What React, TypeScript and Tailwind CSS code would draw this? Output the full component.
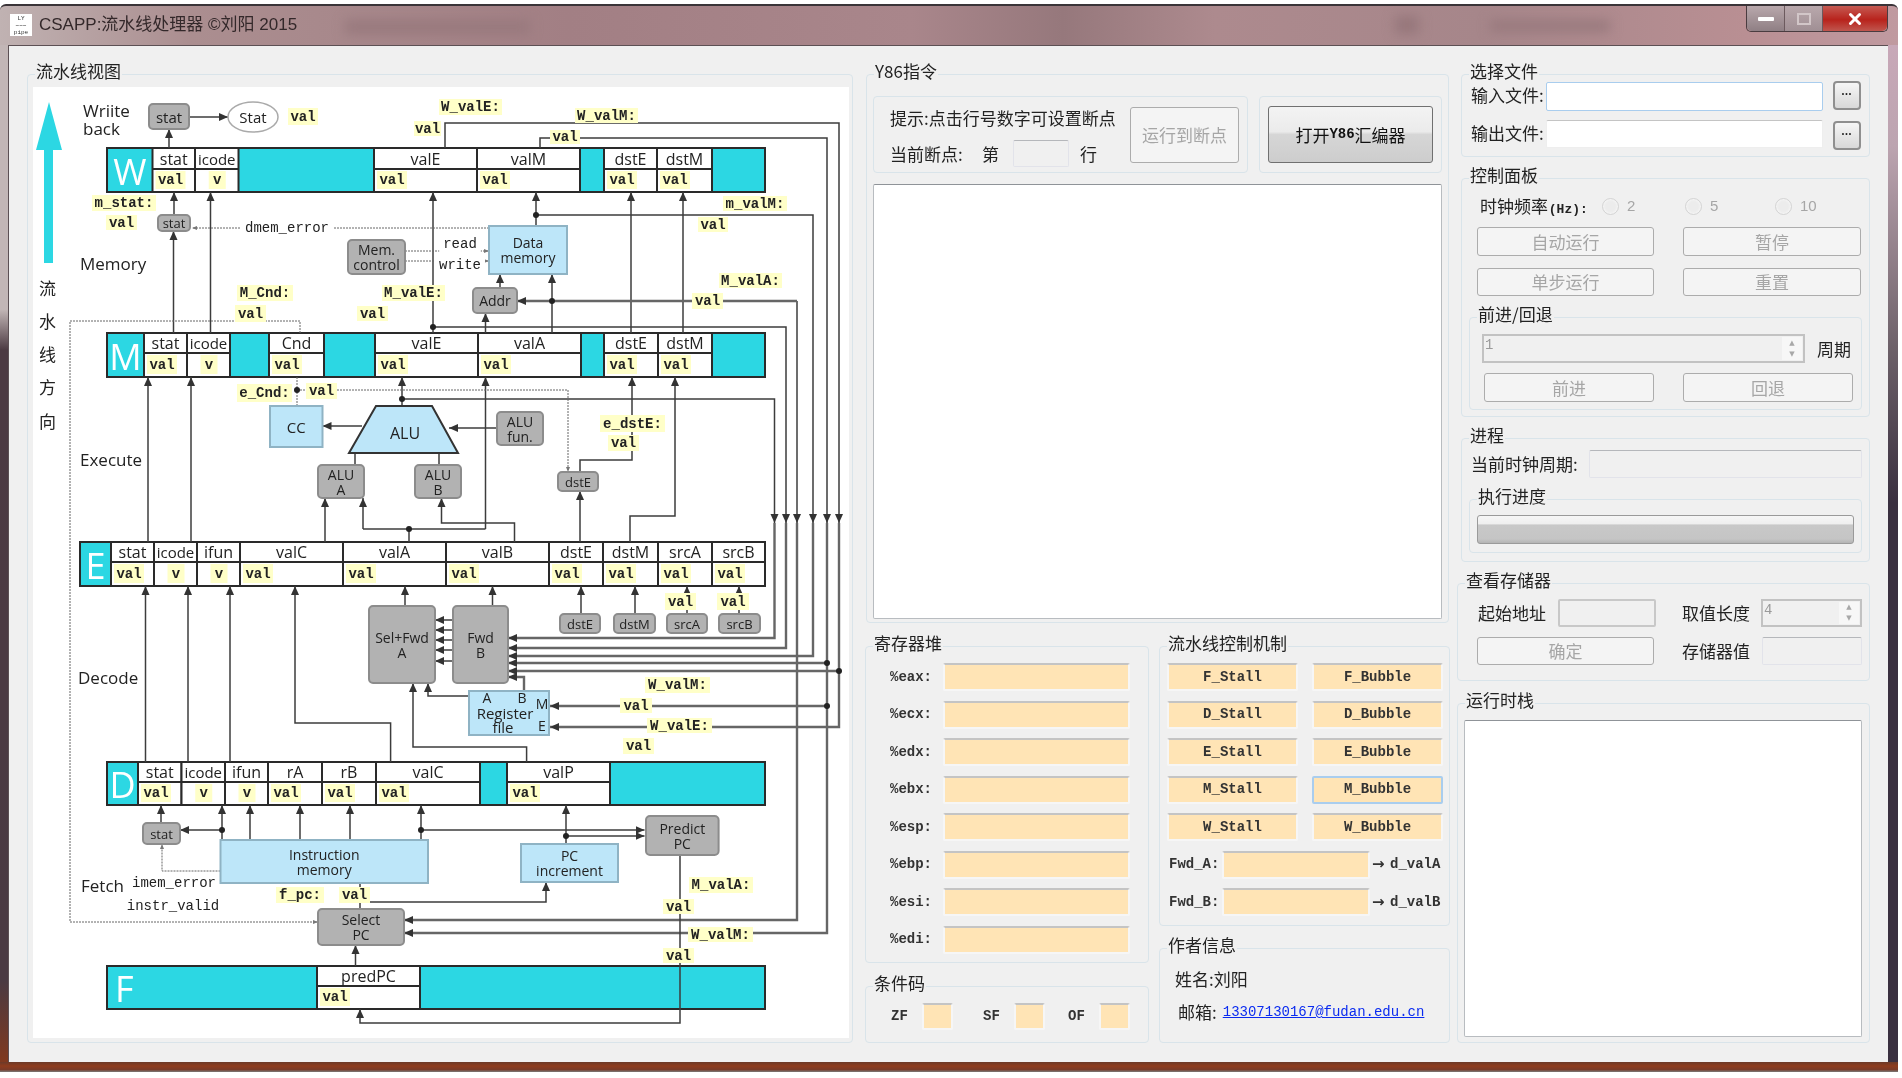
import { X } from "lucide-react";
import type { ReactNode } from "react";

const mono = "font-['Liberation_Mono',monospace]";
const disabledBtn = "flex items-center justify-center rounded-[3px] border border-[#acacac] bg-[#f4f4f4] text-[#a6a6a6]";
const readonlyBox = "block rounded-[2px] border border-[#e2e3ea] border-t-[#b5b7bb] bg-[#f0f0f0] outline-none";
const orangeBox = "block rounded-[2px] border-2 border-[#f6f6f6] border-t-[#c4c4c4] bg-[#ffe4b5] outline-none";
const dotsBtn = "flex w-[28px] items-center justify-center rounded-[4px] border-2 border-[#8f8f8f] bg-[linear-gradient(180deg,#f6f6f6,#d8d8d8)]";

const Group = ({ title, className, children }: { title: string; className: string; children?: ReactNode }) => (
  <div className={`relative rounded-[4px] border border-[#d9e4ea] ${className}`}>
    <span className="absolute -top-[15px] left-[7px] bg-[#f0f0f0] px-[1px] text-[17px] leading-[22px] text-[#222]">{title}</span>
    {children}
  </div>
);

const Spinner = ({ value, className }: { value: string; className: string }) => (
  <div className={`flex justify-between border-2 border-[#c2c2c2] bg-[#f0f0f0] ${className}`}>
    <span className={`${mono} pl-[1px] text-[14px] leading-[18px] text-[#9a9a9a]`}>{value}</span>
    <div className="m-[1px] flex w-[20px] flex-col items-center justify-center bg-[#f7f7f7] text-[7px] leading-[11px] text-[#a8a8a8]">
      <span className="font-['DejaVu_Sans']">▲</span>
      <span className="font-['DejaVu_Sans']">▼</span>
    </div>
  </div>
);

// ---- diagram ----
type Cell = { x: number; t?: string; v?: "val" | "v" };
type RegProps = { x0: number; y0: number; y1: number; mid: number; letter: string; letterEnd: number; cells: Cell[] };

const CYAN = "#2cd7e3";
const BLUE = "#bde6f9";

const Reg = ({ x0, y0, y1, mid, letter, letterEnd, cells }: RegProps) => {
  let prev = letterEnd;
  return (
    <g>
      <rect x={x0} y={y0} width={765 - x0} height={y1 - y0} fill={CYAN} stroke="#2a2a2a" strokeWidth={2} />
      <text x={letter === "F" ? x0 + 8 : (x0 + letterEnd) / 2} y={(y0 + y1) / 2 + 1} fill="#fff" fontSize={36} fontWeight={400} textAnchor={letter === "F" ? "start" : "middle"} dominantBaseline="central">{letter}</text>
      {cells.map((c) => {
        const start = prev;
        prev = c.x;
        if (!c.t) return null;
        const w = c.x - start;
        return (
          <g key={start}>
            <rect x={start} y={y0} width={w} height={y1 - y0} fill="#fff" stroke="#2a2a2a" strokeWidth={2} />
            <line x1={start} x2={c.x} y1={mid} y2={mid} stroke="#2a2a2a" strokeWidth={2} />
            <text x={start + w / 2} y={(y0 + mid) / 2} fontSize={c.t.length > 4 && w < 50 ? 15 : 16} fill="#222" textAnchor="middle" dominantBaseline="central">{c.t}</text>
            {c.v === "val" && <Tag x1={start + 3} y1={mid + 2} x2={start + 33} y2={y1 - 3} t="val" />}
            {c.v === "v" && <Tag x1={start + w / 2 - 8} y1={mid + 2} x2={start + w / 2 + 9} y2={y1 - 3} t="v" />}
          </g>
        );
      })}
    </g>
  );
};

const Tag = ({ x1, y1, x2, y2, t }: { x1: number; y1: number; x2: number; y2: number; t: string }) => (
  <g>
    <rect x={x1} y={y1} width={x2 - x1} height={y2 - y1} fill="#ffffc8" />
    <text className={mono} x={(x1 + x2) / 2} y={(y1 + y2) / 2} fontSize={14} fontWeight={700} fill="#222" textAnchor="middle" dominantBaseline="central">{t}</text>
  </g>
);

const Box = ({ x1, y1, x2, y2, lines, fill = "#b2b2b2", size = 14, gap = 15 }: { x1: number; y1: number; x2: number; y2: number; lines: string[]; fill?: string; size?: number; gap?: number }) => {
  const cy = (y1 + y2) / 2 - ((lines.length - 1) * gap) / 2;
  return (
    <g>
      <rect x={x1} y={y1} width={x2 - x1} height={y2 - y1} rx={fill === BLUE ? 0 : 4} fill={fill} stroke={fill === BLUE ? "#8fb3c4" : "#8c8c8c"} strokeWidth={2} />
      {lines.map((l, i) => (
        <text key={l} x={(x1 + x2) / 2} y={cy + i * gap} fontSize={size} fill="#222" textAnchor="middle" dominantBaseline="central">{l}</text>
      ))}
    </g>
  );
};

const arrows = [
  "169,148 169,129", "189,117 228,117", "174,215 174,192", "173.5,333 173.5,231", "210.5,333 210.5,192",
  "433,333 433,192", "536,226 536,192", "631,333 631,192", "683,333 683,192", "552,333 552,274",
  "500,288 500,274", "485.5,333 485.5,313", "797,301 797,523",
  "445,148 445,123 839,123 839,523",
  "540,148 540,138 827,138 827,523",
  "536,215 813,215 813,523", "433,327 786,327 786,523",
  "402,399 774.5,399 774.5,523",
  "148,542 148,377", "191,542 191,377", "402,406 402,377", "362,426 322.5,426", "497,428 449,428",
  "325,542 325,498", "363,529 363,498", "485.5,529 485.5,377", "514.5,542 514.5,523 441.5,523 441.5,498",
  "580,542 580,491", "580,472 580,460 632,460 632,377", "630,542 630,516 675,516 675,377",
  "145.5,762 145.5,586", "188,762 188,586", "230,762 230,586", "390.6,762 390.6,723 295,723 295,586",
  "405,606 405,586", "492.5,606 492.5,586", "581,614 581,586", "635,614 635,586", "687,614 687,586", "739,614 739,586",
  "453,620 435,620", "453,630 435,630", "453,640 435,640", "453,650 435,650", "453,661 435,661",
  "469,696 428,696 428,683", "526.6,762 526.6,747 413,747 413,683",
  "161,823 161,805", "222,840 222,805", "250,840 250,805", "300,840 300,805", "350,840 350,805", "421,840 421,805", "566,843 566,805",
  "222,830 180,830", "421,830 644.5,830", "566,836 644.5,836", "370,902 546,902 546,882", "355.5,966 355.5,945",
];
const thick = [
  "797,301 517,301", "797,523 797,920 404,920", "839,523 839,727 550,727", "839,671 508,671", "827,523 827,933 404,933", "827,663 508,663",
  "827,706 550,706", "813,523 813,656 508,656", "786,523 786,648 508,648", "774.5,523 774.5,638 508,638", "524,691 524,677 508,677",
];
const plain = ["355,453 355,465", "439,453 439,465", "409,542 409,529", "363,529 485.5,529", "360,883 360,909"];
const dotted = ["300,333 300,321 70,321 70,922 318,922", "220.5,871 162,871 162,844", "489,228 192,228", "337,390 568,390 568,472", "405,251 489,251", "405,261 489,261"];
const dots = [[536, 215], [433, 327], [552, 301], [402, 399], [409, 529], [827, 663], [839, 671], [827, 706], [222, 830], [421, 830], [566, 836], [297, 390]];

const tags: [number, number, number, number, string][] = [
  [288, 108, 318, 125, "val"], [439, 99, 502, 115, "W_valE:"], [414, 121, 441, 136, "val"], [575, 108, 638, 123, "W_valM:"],
  [550, 130, 580, 144, "val"], [92, 195, 156, 211, "m_stat:"], [106, 215, 137, 230, "val"], [723, 196, 787, 211, "m_valM:"],
  [698, 217, 728, 232, "val"], [719, 273, 782, 288, "M_valA:"], [692, 293, 723, 309, "val"], [237, 285, 293, 301, "M_Cnd:"],
  [235, 305, 266, 322, "val"], [382, 285, 445, 301, "M_valE:"], [357, 306, 388, 321, "val"], [237, 384, 292, 402, "e_Cnd:"],
  [306, 383, 337, 399, "val"], [600, 415, 665, 432, "e_dstE:"], [608, 435, 639, 451, "val"], [665, 593, 696, 610, "val"],
  [717, 593, 749, 610, "val"], [645, 677, 710, 693, "W_valM:"], [620, 698, 652, 713, "val"], [647, 718, 712, 733, "W_valE:"],
  [623, 738, 654, 754, "val"], [689, 877, 753, 893, "M_valA:"], [663, 899, 694, 914, "val"], [276, 887, 324, 903, "f_pc:"],
  [339, 887, 370, 903, "val"], [688, 927, 753, 942, "W_valM:"], [663, 948, 694, 963, "val"],
];

const sideText: [string, number, number][] = [["Memory", 80, 263], ["Execute", 80, 459], ["Decode", 78, 677], ["Fetch", 81, 885]];
const monoText: [string, number, number, string?][] = [
  ["dmem_error", 287, 228, "bg"], ["read", 460, 244, "bg"], ["write", 460, 265, "bg"], ["imem_error", 174, 883], ["instr_valid", 173, 906],
];
const rfLetters: [string, number, number][] = [["A", 487, 697], ["B", 522, 697], ["M", 542, 703], ["E", 542, 725]];

const Diagram = () => (
  <svg className="block bg-white font-['Open_Sans',sans-serif]" width={816} height={951} viewBox="33 87 816 951">
    <defs>
      <marker id="tip" markerUnits="userSpaceOnUse" markerWidth={10} markerHeight={10} refX={9} refY={5} orient="auto">
        <path d="M0 1 L9 5 L0 9 Z" fill="#333" />
      </marker>
      <marker id="tinyTip" markerUnits="userSpaceOnUse" markerWidth={6} markerHeight={6} refX={5} refY={3} orient="auto">
        <path d="M0 1 L5 3 L0 5 Z" fill="#777" />
      </marker>
    </defs>

    <path d="M49 102 L62 150 L53 150 L53 263 L44 263 L44 150 L36 150 Z" fill={CYAN} />
    {["流", "水", "线", "方", "向"].map((c, i) => (
      <text key={c} className="font-['Noto_Sans_CJK_SC',sans-serif]" x={47.5} y={287 + i * 33.3} fontSize={17} fill="#222" textAnchor="middle" dominantBaseline="central">{c}</text>
    ))}
    <text x={83} y={110} fontSize={17} fill="#222" dominantBaseline="central">Wriite</text>
    <text x={83} y={128} fontSize={17} fill="#222" dominantBaseline="central">back</text>
    {sideText.map(([t, x, y]) => (
      <text key={t} x={x} y={y} fontSize={17} fill="#222" dominantBaseline="central">{t}</text>
    ))}

    <Reg x0={107} y0={148} y1={192} mid={169} letter="W" letterEnd={152.5} cells={[
      { x: 195, t: "stat", v: "val" }, { x: 238.5, t: "icode", v: "v" }, { x: 374 }, { x: 477, t: "valE", v: "val" }, { x: 580, t: "valM", v: "val" },
      { x: 604 }, { x: 657, t: "dstE", v: "val" }, { x: 712, t: "dstM", v: "val" },
    ]} />
    <Reg x0={107} y0={333} y1={377} mid={353} letter="M" letterEnd={144} cells={[
      { x: 187, t: "stat", v: "val" }, { x: 230, t: "icode", v: "v" }, { x: 269 }, { x: 324, t: "Cnd", v: "val" }, { x: 375 }, { x: 478, t: "valE", v: "val" },
      { x: 581, t: "valA", v: "val" }, { x: 604 }, { x: 658, t: "dstE", v: "val" }, { x: 712, t: "dstM", v: "val" },
    ]} />
    <Reg x0={80} y0={542} y1={586} mid={562} letter="E" letterEnd={111} cells={[
      { x: 154, t: "stat", v: "val" }, { x: 197, t: "icode", v: "v" }, { x: 240, t: "ifun", v: "v" }, { x: 343, t: "valC", v: "val" }, { x: 446, t: "valA", v: "val" },
      { x: 549, t: "valB", v: "val" }, { x: 603, t: "dstE", v: "val" }, { x: 658, t: "dstM", v: "val" }, { x: 712, t: "srcA", v: "val" }, { x: 765, t: "srcB", v: "val" },
    ]} />
    <Reg x0={107} y0={762} y1={805} mid={782} letter="D" letterEnd={138} cells={[
      { x: 181.5, t: "stat", v: "val" }, { x: 225, t: "icode", v: "v" }, { x: 268, t: "ifun", v: "v" }, { x: 322, t: "rA", v: "val" }, { x: 376, t: "rB", v: "val" },
      { x: 480, t: "valC", v: "val" }, { x: 507 }, { x: 610, t: "valP", v: "val" },
    ]} />
    <Reg x0={107} y0={966} y1={1009} mid={986} letter="F" letterEnd={317} cells={[{ x: 420, t: "predPC", v: "val" }]} />

    <g fill="none" stroke="#3c3c3c" strokeWidth={1.5}>
      {arrows.map((p) => <polyline key={p} points={p} markerEnd="url(#tip)" />)}
      {plain.map((p) => <polyline key={p} points={p} />)}
      {thick.map((p) => <polyline key={p} points={p} stroke="#666" strokeWidth={2.4} markerEnd="url(#tip)" />)}
      <polyline points="680,855 680,1023 360,1023 360,1009" markerEnd="url(#tip)" />
      {dotted.map((p) => <polyline key={p} points={p} stroke="#666" strokeWidth={1} strokeDasharray="2 1" markerEnd="url(#tinyTip)" />)}
      <polyline points="297,406 297,377" stroke="#666" strokeWidth={1} strokeDasharray="2 1" />
      <polyline points="297,390 306,390" stroke="#666" strokeWidth={1} strokeDasharray="2 1" />
    </g>
    {dots.map(([x, y]) => <circle key={`${x}-${y}`} cx={x} cy={y} r={3} fill="#222" />)}

    <Box x1={149} y1={104} x2={189} y2={129} lines={["stat"]} size={15} />
    <ellipse cx={253} cy={117} rx={25} ry={15} fill="#fff" stroke="#aaa" strokeWidth={1.5} />
    <text x={253} y={117} fontSize={15} fill="#222" textAnchor="middle" dominantBaseline="central">Stat</text>
    <Box x1={158} y1={215} x2={190} y2={231} lines={["stat"]} size={13} />
    <Box x1={489} y1={226} x2={567} y2={274} lines={["Data", "memory"]} fill={BLUE} />
    <Box x1={348} y1={240} x2={405} y2={274} lines={["Mem.", "control"]} />
    <Box x1={473} y1={288} x2={517} y2={313} lines={["Addr"]} />
    <Box x1={270} y1={406} x2={322.5} y2={447} lines={["CC"]} fill={BLUE} size={15} />
    <path d="M376 406 L432 406 L458 453 L349 453 Z" fill={BLUE} stroke="#333" strokeWidth={2} />
    <text x={405} y={433} fontSize={16} fill="#222" textAnchor="middle" dominantBaseline="central">ALU</text>
    <Box x1={497} y1={412} x2={543} y2={445} lines={["ALU", "fun."]} />
    <Box x1={318} y1={465} x2={364} y2={498} lines={["ALU", "A"]} />
    <Box x1={415} y1={465} x2={461} y2={498} lines={["ALU", "B"]} />
    <Box x1={558} y1={472} x2={598} y2={491} lines={["dstE"]} size={13} />
    <Box x1={369} y1={606} x2={435} y2={683} lines={["Sel+Fwd", "A"]} />
    <Box x1={453} y1={606} x2={508} y2={683} lines={["Fwd", "B"]} />
    <Box x1={560} y1={614} x2={600} y2={633} lines={["dstE"]} size={13} />
    <Box x1={614} y1={614} x2={655} y2={633} lines={["dstM"]} size={13} />
    <Box x1={667} y1={614} x2={707} y2={633} lines={["srcA"]} size={13} />
    <Box x1={719} y1={614} x2={760} y2={633} lines={["srcB"]} size={13} />
    <rect x={469} y={691} width={80} height={44} fill={BLUE} stroke="#8fb3c4" strokeWidth={2} />
    <text x={505} y={713} fontSize={15} fill="#222" textAnchor="middle" dominantBaseline="central">Register</text>
    <text x={503} y={727} fontSize={15} fill="#222" textAnchor="middle" dominantBaseline="central">file</text>
    {rfLetters.map(([t, x, y]) => (
      <text key={t} x={x} y={y} fontSize={14} fill="#222" textAnchor="middle" dominantBaseline="central">{t}</text>
    ))}
    <Box x1={143} y1={823} x2={180} y2={844} lines={["stat"]} size={13} />
    <Box x1={220.5} y1={840} x2={428} y2={883} lines={["Instruction", "memory"]} fill={BLUE} />
    <Box x1={521} y1={844} x2={618} y2={882} lines={["PC", "increment"]} fill={BLUE} />
    <Box x1={646} y1={816} x2={718.6} y2={855} lines={["Predict", "PC"]} />
    <Box x1={318} y1={909} x2={404} y2={945} lines={["Select", "PC"]} />

    {monoText.map(([t, x, y, bg]) => (
      <g key={t}>
        {bg && <rect x={x - t.length * 4.2 - 4} y={y - 8} width={t.length * 8.4 + 8} height={16} fill="#fff" />}
        <text className={mono} x={x} y={y} fontSize={14} fill="#222" textAnchor="middle" dominantBaseline="central">{t}</text>
      </g>
    ))}
    {tags.map(([x1, y1, x2, y2, t]) => <Tag key={`${x1}-${y1}`} x1={x1} y1={y1} x2={x2} y2={y2} t={t} />)}
  </svg>
);

// ---- right hand panels ----
const regs = ["%eax:", "%ecx:", "%edx:", "%ebx:", "%esp:", "%ebp:", "%esi:", "%edi:"];
const stalls = ["F", "D", "E", "M", "W"];

const CtrlCell = ({ text, focused }: { text: string; focused?: boolean }) => (
  <div className={`${mono} flex h-[28px] items-center justify-center rounded-[2px] border-2 bg-[#ffe4b5] text-[14px] font-bold text-[#333] ${focused ? "border-[#a9cdee]" : "border-[#f6f6f6] border-t-[#c4c4c4]"}`}>{text}</div>
);

const Radio = ({ label, className }: { label: string; className: string }) => (
  <div className={`flex items-center gap-[8px] ${className}`}>
    <span className="h-[17px] w-[17px] rounded-full border border-[#d4d4d4] bg-[#ececec] shadow-[inset_0_0_3px_#fff]" />
    <span className="font-['Liberation_Sans',sans-serif] text-[15px] text-[#a6a6a6]">{label}</span>
  </div>
);

const InstructionPanel = () => (
  <div className="w-[585px]">
    <Group title="Y86指令" className="ml-[1px] h-[549px] w-[583px] pl-[6px] pt-[21px]">
      <div className="flex gap-[11px]">
        <div className="flex h-[77px] w-[375px] rounded-[4px] border border-[#d9e4ea] pl-[16px] pt-[10px]">
          <div className="w-[240px]">
            <p className="whitespace-nowrap text-[17px] leading-[22px] text-[#222]">提示:点击行号数字可设置断点</p>
            <div className="mt-[11px] flex items-center text-[17px] leading-[22px] text-[#222]">
              <span className="w-[92px]">当前断点:</span>
              <span className="w-[31px]">第</span>
              <input readOnly className={`${readonlyBox} h-[27px] w-[56px]`} />
              <span className="ml-[11px]">行</span>
            </div>
          </div>
          <div className={`${disabledBtn} h-[56px] w-[109px] text-[17px]`}>运行到断点</div>
        </div>
        <div className="flex h-[77px] w-[183px] items-center justify-center rounded-[4px] border border-[#d9e4ea]">
          <div className="flex h-[57px] w-[165px] items-center justify-center rounded-[3px] border border-[#707070] bg-[linear-gradient(180deg,#f3f3f3_0%,#ebebeb_45%,#d6d6d6_50%,#cdcdcd_100%)] text-[17px] text-[#111]">
            <span>打开</span>
            <span className={`${mono} text-[14px] font-bold`}>Y86</span>
            <span>汇编器</span>
          </div>
        </div>
      </div>
      <textarea readOnly className="mt-[11px] block h-[435px] w-[569px] resize-none rounded-[2px] border border-[#b8bcc0] border-t-[#8f9398] bg-white outline-none" />
    </Group>

    <div className="mt-[23px] flex gap-[10px]">
      <div className="w-[284px]">
        <Group title="寄存器堆" className="h-[317px] pl-[24px] pt-[16px]">
          <div className="flex flex-col gap-[9.5px]">
            {regs.map((r) => (
              <div key={r} className="flex items-center">
                <span className={`${mono} w-[53px] text-[14px] font-bold text-[#333]`}>{r}</span>
                <input readOnly className={`${orangeBox} h-[28px] w-[187px]`} />
              </div>
            ))}
          </div>
        </Group>
        <Group title="条件码" className="mt-[23px] flex h-[57px] pl-[25px] pt-[16px]">
          <span className={`${mono} w-[31px] text-[14px] font-bold leading-[27px] text-[#333]`}>ZF</span>
          <input readOnly className={`${orangeBox} h-[27px] w-[31px]`} />
          <span className={`${mono} ml-[30px] w-[31px] text-[14px] font-bold leading-[27px] text-[#333]`}>SF</span>
          <input readOnly className={`${orangeBox} h-[27px] w-[31px]`} />
          <span className={`${mono} ml-[23px] w-[31px] text-[14px] font-bold leading-[27px] text-[#333]`}>OF</span>
          <input readOnly className={`${orangeBox} h-[27px] w-[31px]`} />
        </Group>
      </div>
      <div className="w-[291px]">
        <Group title="流水线控制机制" className="h-[280px] pl-[7px] pt-[16px]">
          <div className="grid w-[276px] grid-cols-2 gap-x-[14px] gap-y-[9.5px]">
            {stalls.map((s) => [
              <CtrlCell key={`${s}s`} text={`${s}_Stall`} />,
              <CtrlCell key={`${s}b`} text={`${s}_Bubble`} focused={s === "M"} />,
            ])}
          </div>
          {["A", "B"].map((k) => (
            <div key={k} className={`${mono} mt-[9.5px] flex items-center text-[14px] font-bold text-[#333]`}>
              <span className="ml-[2px] w-[53px]">{`Fwd_${k}:`}</span>
              <input readOnly className={`${orangeBox} h-[28px] w-[148px]`} />
              <span className="ml-[2px] w-[18px] font-['DejaVu_Sans',sans-serif] text-[15px]">→</span>
              <span>{`d_val${k}`}</span>
            </div>
          ))}
        </Group>
        <Group title="作者信息" className="mt-[22px] h-[95px] pl-[15px] pt-[19px] text-[17px] text-[#222]">
          <p className="leading-[22px]">姓名:刘阳</p>
          <p className="ml-[3px] mt-[11px] flex items-center leading-[22px]">
            邮箱:<a href="#" className={`${mono} ml-[6px] text-[14px] text-[#0a2bf0] underline`}>13307130167@fudan.edu.cn</a>
          </p>
        </Group>
      </div>
    </div>
  </div>
);

const ControlPanels = () => (
  <div className="ml-[7px] w-[413px] text-[17px] text-[#222]">
    <Group title="选择文件" className="ml-[4px] h-[83px] pl-[9px] pt-[7px]">
      <div className="flex">
        <span className="w-[75px] leading-[26px]">输入文件:</span>
        <input readOnly className="h-[29px] w-[277px] rounded-[2px] border border-[#a9cdee] bg-white outline-none" />
        <div className={`${dotsBtn} -mt-[1px] ml-[10px] h-[29px]`}>
          <span className="mb-[4px] font-['Liberation_Sans',sans-serif] text-[7px] leading-none tracking-[1px] text-[#222]">•••</span>
        </div>
      </div>
      <div className="mt-[9px] flex">
        <span className="w-[75px] leading-[26px]">输出文件:</span>
        <input readOnly className="h-[28px] w-[277px] rounded-[2px] border border-[#eeeeee] border-t-[#c4c4c4] bg-white outline-none" />
        <div className={`${dotsBtn} ml-[10px] mt-[1px] h-[29px]`}>
          <span className="mb-[4px] font-['Liberation_Sans',sans-serif] text-[7px] leading-none tracking-[1px] text-[#222]">•••</span>
        </div>
      </div>
    </Group>

    <Group title="控制面板" className="ml-[4px] mt-[21px] h-[239px] pl-[15px] pt-[17px]">
      <div className="flex h-[20px] items-center">
        <span className="ml-[3px] w-[122px] whitespace-nowrap">时钟频率 <span className={`${mono} -ml-[3px] text-[13px] font-bold`}>(Hz):</span></span>
        <Radio label="2" className="w-[83px]" />
        <Radio label="5" className="w-[90px]" />
        <Radio label="10" className="" />
      </div>
      <div className="mt-[11px] grid w-[384px] grid-cols-[177px_178px] gap-x-[29px] gap-y-[12px]">
        <div className={`${disabledBtn} h-[29px]`}>自动运行</div>
        <div className={`${disabledBtn} h-[29px]`}>暂停</div>
        <div className={`${disabledBtn} h-[28px]`}>单步运行</div>
        <div className={`${disabledBtn} h-[28px]`}>重置</div>
      </div>
      <Group title="前进/回退" className="-ml-[8px] mt-[21px] h-[93px] w-[393px] pl-[12px] pt-[16px]">
        <div className="flex items-center">
          <Spinner value="1" className="h-[29px] w-[323px]" />
          <span className="ml-[12px]">周期</span>
        </div>
        <div className="ml-[2px] mt-[10px] flex">
          <div className={`${disabledBtn} h-[29px] w-[170px]`}>前进</div>
          <div className={`${disabledBtn} ml-[29px] h-[29px] w-[170px]`}>回退</div>
        </div>
      </Group>
    </Group>

    <Group title="进程" className="ml-[4px] mt-[21px] h-[124px] pl-[7px] pt-[11px]">
      <div className="flex items-center">
        <span className="ml-[2px] w-[118px]">当前时钟周期:</span>
        <input readOnly className={`${readonlyBox} h-[28px] w-[273px]`} />
      </div>
      <Group title="执行进度" className="mt-[21px] h-[54px] w-[393px] pl-[7px] pt-[15px]">
        <div className="h-[29px] w-[377px] rounded-[3px] border border-[#9a9a9a] bg-[linear-gradient(180deg,#f6f6f6_0%,#efefef_28%,#c8c8c8_34%,#c5c5c5_85%,#b4b4b4_100%)]" />
      </Group>
    </Group>

    <Group title="查看存储器" className="mt-[21px] h-[98px] pl-[20px] pt-[15px]">
      <div className="flex items-center">
        <span className="w-[80px]">起始地址</span>
        <div className="h-[28px] w-[98px] rounded-[2px] border-2 border-[#c8c8c8]" />
        <span className="ml-[26px] w-[79px]">取值长度</span>
        <Spinner value="4" className="h-[28px] w-[101px]" />
      </div>
      <div className="-ml-[1px] mt-[10px] flex items-center">
        <div className={`${disabledBtn} h-[28px] w-[177px]`}>确定</div>
        <span className="ml-[28px] w-[80px]">存储器值</span>
        <input readOnly className={`${readonlyBox} h-[28px] w-[100px]`} />
      </div>
    </Group>

    <Group title="运行时栈" className="mt-[22px] h-[340px] pl-[6px] pt-[16px]">
      <textarea readOnly className="block h-[317px] w-[398px] resize-none rounded-[2px] border border-[#b8bcc0] border-t-[#8f9398] bg-white outline-none" />
    </Group>
  </div>
);

export default function App() {
  return (
    <div className="h-[1078px] w-[1902px] overflow-hidden bg-white pt-[4px] font-['Noto_Sans_CJK_SC','Liberation_Sans',sans-serif] blur-[0.5px]">
      <div className="w-[1898px]">
        <div className="relative flex h-[41px] items-start justify-between rounded-t-[6px] border-t-2 border-[#3a3438] bg-[linear-gradient(90deg,#c0b2b2_0%,#ab8e90_10%,#a27f84_30%,#a9868b_48%,#96787c_56%,#ad8a8e_64%,#a6868a_78%,#b98f93_92%,#c09aa0_100%)]">
          <span className="absolute left-[345px] top-[14px] h-[14px] w-[185px] bg-[#98797d] blur-[6px]" />
          <span className="absolute left-[1490px] top-[14px] h-[12px] w-[120px] bg-[#98797d] blur-[6px]" />
          <span className="absolute left-[1395px] top-[10px] h-[18px] w-[24px] bg-[#96777b] blur-[6px]" />
          <div className="relative ml-[10px] mt-[8px] flex items-center gap-[7px]">
            <div className={`${mono} flex h-[22px] w-[22px] flex-col items-center justify-center bg-white text-[6px] leading-[7px] text-[#333]`}>
              <span>LY</span>
              <span>~~~</span>
              <span>pipe</span>
            </div>
            <span className="whitespace-nowrap font-['Liberation_Sans','Noto_Sans_CJK_SC',sans-serif] text-[17px] leading-[22px] text-[#33282a]">CSAPP:流水线处理器 ©刘阳 2015</span>
          </div>
          <div className="relative mr-[10px] flex h-[26px] w-[142px] rounded-b-[5px] border border-t-0 border-[#4a3c40]">
            <div className="flex w-[38px] items-center justify-center rounded-bl-[5px] border-r border-[#6c5a5e] bg-[linear-gradient(180deg,#b9a8ac,#8f7f84)]">
              <span className="h-[4px] w-[16px] rounded-[1px] bg-white" />
            </div>
            <div className="flex w-[38px] items-center justify-center border-r border-[#6c5a5e] bg-[linear-gradient(180deg,#b9a8ac,#a08f94)]">
              <span className="h-[12px] w-[14px] border-2 border-[#d2c6c8]" />
            </div>
            <div className="flex flex-1 items-center justify-center rounded-br-[5px] bg-[linear-gradient(180deg,#c65a52_0%,#b8231c_55%,#c0564e_100%)]">
              <X size={18} strokeWidth={4} className="text-white" />
            </div>
          </div>
        </div>

        <div className="flex h-[1017px]">
          <div className="w-[8px] bg-[linear-gradient(180deg,#c2b6b6_0%,#c2b6b6_26%,#4c3a42_30%,#4a3a42_92%,#80391f_100%)]" />
          <div className="flex w-[1880px] border-t border-l border-[#5c5054] bg-[#f0f0f0] pl-[18px] pt-[28px]">
            <Group title="流水线视图" className="h-[969px] w-[826px] pl-[5px] pt-[12px]">
              <Diagram />
            </Group>
            <div className="ml-[12px]">
              <InstructionPanel />
            </div>
            <ControlPanels />
          </div>
          <div className="w-[10px] bg-[linear-gradient(180deg,#c8a8b8_0%,#bca4b0_10%,#6c6068_30%,#3a3040_45%,#3a3040_100%)]" />
        </div>
        <div className="h-[10px] bg-[linear-gradient(180deg,#6c3a28_0%,#8e3c1e_40%,#7a3b28_75%,#7a7a7a_100%)]" />
      </div>
    </div>
  );
}
